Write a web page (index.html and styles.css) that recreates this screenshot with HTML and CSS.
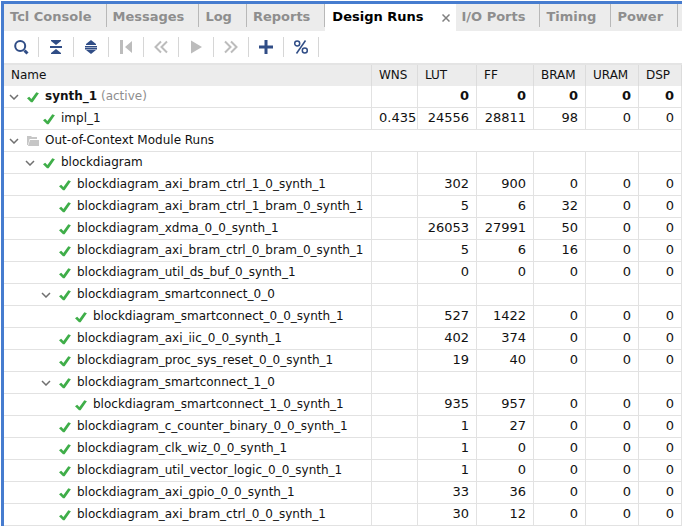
FILE: index.html
```
<!DOCTYPE html>
<html lang="en">
<head>
<meta charset="utf-8">
<title>Design Runs</title>
<link rel="stylesheet" href="styles.css">
</head>
<body>
<svg class="symbols" aria-hidden="true">
  <symbol id="check" viewBox="0 0 12 12"><path d="M0 7.300 2.200 5.800 4.400 8.100 9.300 1.200 11.900 2.200 5.600 11.200H4z"/></symbol>
  <symbol id="chevron" viewBox="0 0 10 6"><path d="M1 1l4 4 4-4"/></symbol>
  <symbol id="folder" viewBox="0 0 12 10"><path d="M0 0h4l1 1h5v2H2.600L1 9H0z"/><path d="M3 4h9v6H1z"/></symbol>
</svg>
<main class="panel">
  <nav class="tabs">
    <button class="tab">Tcl Console</button>
    <button class="tab">Messages</button>
    <button class="tab">Log</button>
    <button class="tab">Reports</button>
    <div class="tab-active">
      <button class="tab-title">Design Runs</button>
      <button class="close" aria-label="Close"><svg viewBox="0 0 8 8"><path d="M.5.5l7 7M7.500.5l-7 7"/></svg></button>
    </div>
    <button class="tab">I/O Ports</button>
    <button class="tab">Timing</button>
    <button class="tab">Power</button>
  </nav>
  <div class="toolbar">
    <button class="tool" aria-label="Search"><svg viewBox="0 0 16 16"><circle cx="7.200" cy="7" r="5" class="line"/><path class="heavy" d="M11.500 11.500l3 3"/></svg></button>
    <button class="tool" aria-label="Collapse all"><svg viewBox="0 0 16 16"><path d="M3 1h10v1L8 6 3 2zM2 7h12v2H2zM3 15h10v-1l-5-4-5 4z"/></svg></button>
    <button class="tool" aria-label="Expand all"><svg viewBox="0 0 16 16"><path d="M8 1l5 4v1H3V5zM2 7h12v1.500H2zM2 9h12v1.500H2zM8 15l5-4H3z"/></svg></button>
    <button class="tool" aria-label="Reset" disabled><svg viewBox="0 0 16 16"><path d="M2 1h3v14H2zM14 2v12L7 8z"/></svg></button>
    <button class="tool" aria-label="Previous" disabled><svg viewBox="0 0 16 16"><path class="line" d="M8 2.500L2.500 8 8 13.500M14 2.500L8.500 8l5.500 5.500"/></svg></button>
    <button class="tool" aria-label="Launch" disabled><svg viewBox="0 0 16 16"><path d="M3 1.500l11 6.500-11 6.500z"/></svg></button>
    <button class="tool" aria-label="Next" disabled><svg viewBox="0 0 16 16"><path class="line" d="M2 2.500L7.500 8 2 13.500M8 2.500L13.500 8 8 13.500"/></svg></button>
    <button class="tool" aria-label="Create runs"><svg viewBox="0 0 16 16"><path class="heavy" d="M8 1v14M1 8h14"/></svg></button>
    <button class="tool" aria-label="Show percentage"><svg viewBox="0 0 16 16"><g class="thin"><circle cx="4.200" cy="4.500" r="2.500"/><circle cx="11.800" cy="11.500" r="2.500"/><path d="M12.500 1.500l-9 13"/></g></svg></button>
  </div>
  <table class="runs">
    <colgroup><col><col class="c-wns"><col class="c-lut"><col class="c-ff"><col class="c-bram"><col class="c-uram"><col class="c-dsp"></colgroup>
    <thead><tr><th>Name</th><th>WNS</th><th>LUT</th><th>FF</th><th>BRAM</th><th>URAM</th><th>DSP</th></tr></thead>
    <tbody id="rows"></tbody>
  </table>
</main>
<script src="runs.js"></script>
</body>
</html>
```
FILE: runs.js
```
// level, expandable, name, WNS, LUT, FF, BRAM, URAM, DSP
const runs = [
  [0, true, "synth_1", "", 0, 0, 0, 0, 0],
  [1, false, "impl_1", "0.435", 24556, 28811, 98, 0, 0],
  [0, true, "Out-of-Context Module Runs"],
  [1, true, "blockdiagram"],
  [2, false, "blockdiagram_axi_bram_ctrl_1_0_synth_1", "", 302, 900, 0, 0, 0],
  [2, false, "blockdiagram_axi_bram_ctrl_1_bram_0_synth_1", "", 5, 6, 32, 0, 0],
  [2, false, "blockdiagram_xdma_0_0_synth_1", "", 26053, 27991, 50, 0, 0],
  [2, false, "blockdiagram_axi_bram_ctrl_0_bram_0_synth_1", "", 5, 6, 16, 0, 0],
  [2, false, "blockdiagram_util_ds_buf_0_synth_1", "", 0, 0, 0, 0, 0],
  [2, true, "blockdiagram_smartconnect_0_0"],
  [3, false, "blockdiagram_smartconnect_0_0_synth_1", "", 527, 1422, 0, 0, 0],
  [2, false, "blockdiagram_axi_iic_0_0_synth_1", "", 402, 374, 0, 0, 0],
  [2, false, "blockdiagram_proc_sys_reset_0_0_synth_1", "", 19, 40, 0, 0, 0],
  [2, true, "blockdiagram_smartconnect_1_0"],
  [3, false, "blockdiagram_smartconnect_1_0_synth_1", "", 935, 957, 0, 0, 0],
  [2, false, "blockdiagram_c_counter_binary_0_0_synth_1", "", 1, 27, 0, 0, 0],
  [2, false, "blockdiagram_clk_wiz_0_0_synth_1", "", 1, 0, 0, 0, 0],
  [2, false, "blockdiagram_util_vector_logic_0_0_synth_1", "", 1, 0, 0, 0, 0],
  [2, false, "blockdiagram_axi_gpio_0_0_synth_1", "", 33, 36, 0, 0, 0],
  [2, false, "blockdiagram_axi_bram_ctrl_0_0_synth_1", "", 30, 12, 0, 0, 0]
];

document.getElementById("rows").innerHTML = runs.map(([level, open, name, ...values], i) => {
  const group = i === 2;
  const chevron = open ? '<svg class="chevron"><use href="#chevron"/></svg>' : "";
  const icon = group ? '<svg class="folder"><use href="#folder"/></svg>' : '<svg class="check"><use href="#check"/></svg>';
  const label = i === 0 ? `<span><b>${name}</b> <span class="note">(active)</span></span>` : `<span>${name}</span>`;
  const tree = `<div class="tree level-${level}"><span class="toggle">${chevron}</span><span class="status">${icon}</span>${label}</div>`;
  if (group) return `<tr><td colspan="7">${tree}</td></tr>`;
  const cells = Array.from({ length: 6 }, (_, n) => `<td>${values[n] ?? ""}</td>`).join("");
  return `<tr${i === 0 ? ' class="active"' : ""}><td>${tree}</td>${cells}</tr>`;
}).join("");
```
FILE: styles.css
```
* { box-sizing: border-box; }

body {
  margin: 0;
  background: #fff;
  color: #111;
  font: 13px/21px "DejaVu Sans", sans-serif;
  overflow: hidden;
}

button {
  margin: 0;
  padding: 0;
  border: 0;
  background: none;
  color: inherit;
  font: inherit;
}

svg { display: block; }
.symbols { display: none; }

.panel {
  margin: 1px 0 0 1px;
  border: solid #467ccf;
  border-width: 3px 0 0 3px;
}

/* Tabs */
.tabs {
  display: flex;
  align-items: flex-start;
  height: 27px;
  background: #ececec;
  color: #8e8e8e;
  font-weight: bold;
  white-space: nowrap;
}

.tab {
  height: 23px;
  padding: 2px 14px 0 6px;
  border-right: 1px solid #b8b8b8;
}

.tab-active {
  display: flex;
  align-items: center;
  gap: 18px;
  height: 27px;
  padding: 0 6px 0 7px;
  background: #fff;
}

.tab-title {
  height: 23px;
  align-self: flex-start;
  padding-top: 2px;
  color: #000;
}

.close svg {
  width: 8px;
  height: 8px;
  fill: none;
  stroke: #808080;
  stroke-width: 1.5;
}

/* Toolbar */
.toolbar {
  display: flex;
  padding: 6px 0;
}

.tool {
  display: flex;
  align-items: center;
  justify-content: center;
  width: 35px;
  height: 20px;
  border-right: 1px solid #d6d6d6;
  color: #304d86;
}

.tool:disabled { color: #bcbcbc; }

.tool svg {
  width: 16px;
  height: 16px;
  fill: currentColor;
}

.tool .line, .tool .heavy, .tool .thin {
  fill: none;
  stroke: currentColor;
  stroke-width: 2;
}

.tool .heavy { stroke-width: 3; }
.tool .thin { stroke-width: 1.5; }

/* Runs table */
.runs {
  width: 100%;
  table-layout: fixed;
  border-collapse: separate;
  border-spacing: 0;
  border-top: 2px solid #e4e4e4;
}

.c-wns { width: 46px; }
.c-lut { width: 59px; }
.c-ff { width: 57px; }
.c-bram { width: 52px; }
.c-uram { width: 53px; }
.c-dsp { width: 43px; }

th {
  height: 21px;
  padding: 0 0 0 7px;
  border-right: 1px solid #dcdcdc;
  background: #ececec;
  font-size: 12px;
  font-weight: normal;
  text-align: left;
}

td {
  height: 22px;
  padding: 0 7px;
  border: solid #e2e2e2;
  border-width: 0 1px 1px 0;
  line-height: 19px;
  text-align: right;
  vertical-align: top;
  white-space: nowrap;
}

td:first-child {
  padding: 0;
  font-size: 12px;
  line-height: 21px;
  text-align: left;
}

td:nth-child(2) {
  padding-right: 0;
  text-align: left;
}

.active td { font-weight: bold; }
.active td:first-child { font-weight: normal; }
.note { color: #8e8e8e; }

.tree {
  display: flex;
  align-items: center;
}

.level-1 { padding-left: 16px; }
.level-2 { padding-left: 32px; }
.level-3 { padding-left: 48px; }

.toggle {
  flex: none;
  width: 23px;
  padding-left: 5px;
}

.status {
  flex: none;
  width: 18px;
}

.chevron {
  width: 10px;
  height: 6px;
  fill: none;
  stroke: #707070;
  stroke-width: 1.5;
}

.check {
  width: 12px;
  height: 12px;
  fill: #3fae49;
}

.folder {
  width: 12px;
  height: 10px;
  fill: #c6c6c6;
}
```
